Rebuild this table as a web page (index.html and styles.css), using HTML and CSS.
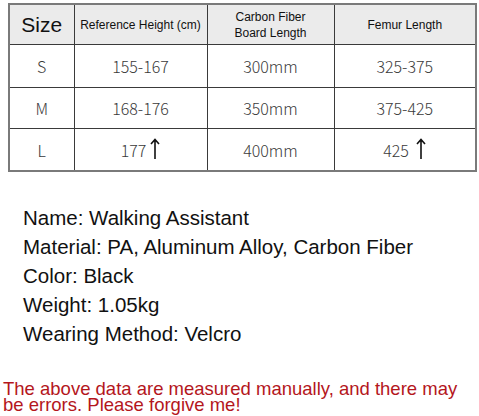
FILE: index.html
```html
<!DOCTYPE html>
<html>
<head>
<meta charset="utf-8">
<link rel="stylesheet" href="styles.css">
</head>
<body>
<table class="size-table">
  <colgroup>
    <col class="c1"><col class="c2"><col class="c3"><col class="c4">
  </colgroup>
  <tr class="head">
    <th class="size-h">Size</th>
    <th>Reference Height (cm)</th>
    <th>Carbon Fiber<br>Board Length</th>
    <th>Femur Length</th>
  </tr>
  <tr class="r1">
    <td>S</td><td>155-167</td><td>300mm</td><td>325-375</td>
  </tr>
  <tr class="r2">
    <td>M</td><td>168-176</td><td>350mm</td><td>375-425</td>
  </tr>
  <tr class="r3">
    <td>L</td>
    <td>177<svg class="arrow" width="10" height="22" viewBox="0 0 10 22"><path d="M5 21V1.5M1 6L5 1.5L9 6" fill="none" stroke="#111" stroke-width="1.6"/></svg></td>
    <td>400mm</td>
    <td>425 <svg class="arrow" width="10" height="22" viewBox="0 0 10 22"><path d="M5 21V1.5M1 6L5 1.5L9 6" fill="none" stroke="#111" stroke-width="1.6"/></svg></td>
  </tr>
</table>

<div class="specs">
  <p>Name: Walking Assistant</p>
  <p>Material: PA, Aluminum Alloy, Carbon Fiber</p>
  <p>Color: Black</p>
  <p>Weight: 1.05kg</p>
  <p>Wearing Method: Velcro</p>
</div>

<p class="note">The above data are measured manually, and there may be errors. Please forgive me!</p>
</body>
</html>
```

FILE: styles.css
```css
html, body {
  margin: 0;
  padding: 0;
  background: #fff;
}

body {
  width: 479px;
  height: 416px;
  overflow: hidden;
}

.size-table {
  margin: 3px 0 0 8px;
  width: 467px;
  border-collapse: collapse;
  border: 2px solid #7a7a7a;
  table-layout: fixed;
}

.c1 { width: 65px; }
.c2 { width: 133px; }
.c3 { width: 127px; }
.c4 { width: 142px; }

.size-table th,
.size-table td {
  border: 1px solid #3a3a3a;
  text-align: center;
  vertical-align: middle;
  padding: 0;
}

.size-table th {
  background: #ebebeb;
  font-family: "Liberation Sans", Arial, sans-serif;
  font-weight: normal;
  font-size: 12px;
  line-height: 16px;
  color: #111;
  height: 39px;
}

.size-table th.size-h {
  font-size: 21px;
}

.size-table td {
  font-family: "Noto Sans CJK SC", "Noto Sans", sans-serif;
  font-size: 16px;
  color: #3a3a3a;
  font-weight: 300;
}

.r1 td { height: 42px; }
.r2 td { height: 40px; }
.r3 td { height: 41px; }

.arrow {
  vertical-align: -3px;
  margin-left: 4px;
}

.specs {
  margin: 31px 0 0 23px;
  font-family: "Liberation Sans", Arial, sans-serif;
  font-size: 20.5px;
  line-height: 29px;
  color: #111;
}

.specs p {
  margin: 0;
}

.note {
  margin: 33px 0 0 3px;
  width: 470px;
  font-family: "Liberation Sans", Arial, sans-serif;
  font-size: 18.5px;
  line-height: 16px;
  color: #b4161c;
}
```
